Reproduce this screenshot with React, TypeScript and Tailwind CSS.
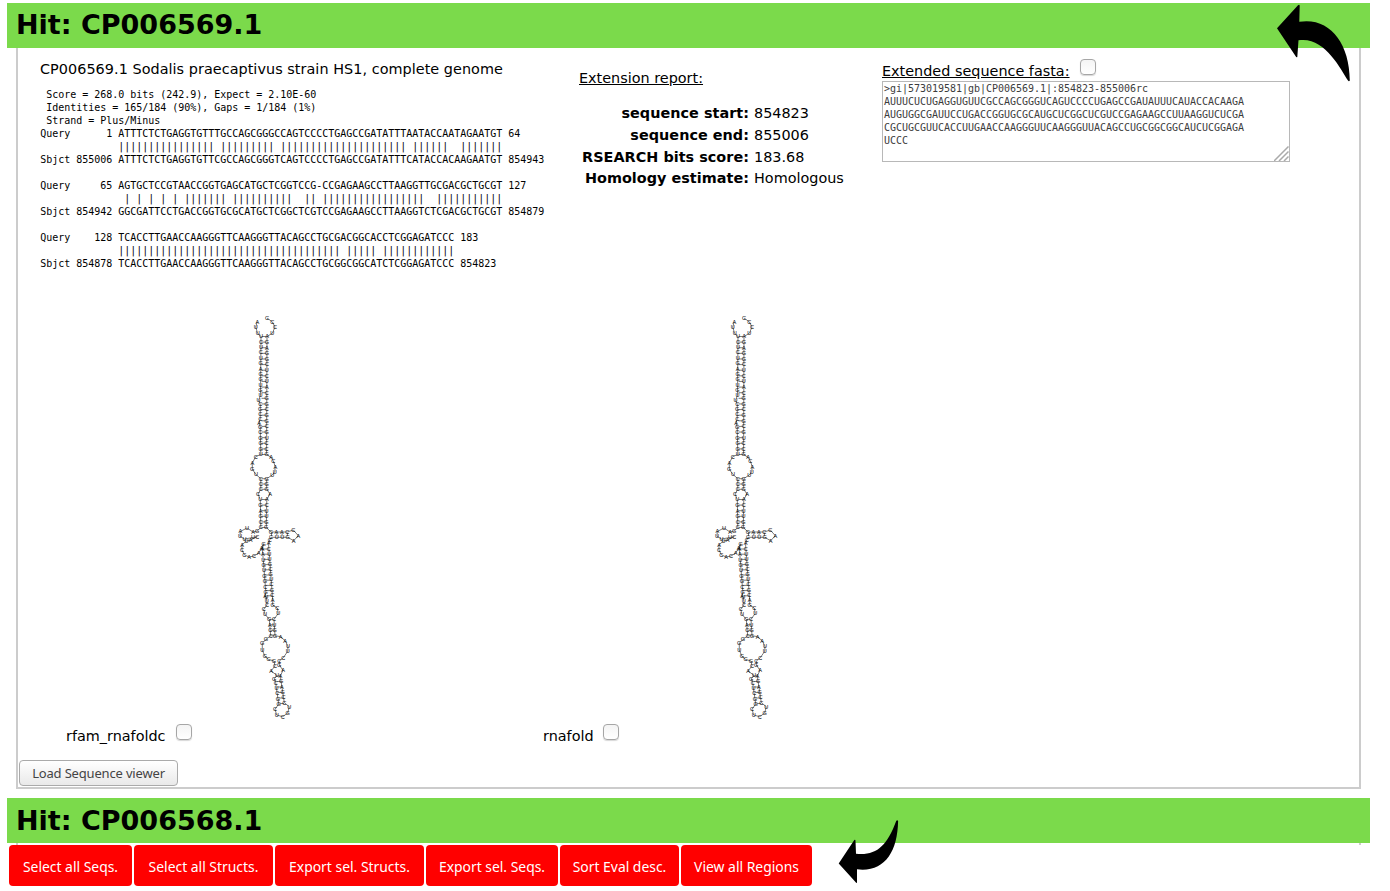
import React from "react";

type Point = [string, number, number];

const stem = (letters: string, x1: number, y1: number, x2: number, y2: number): Point[] =>
  letters.split("").map((c, i) => {
    const t = letters.length > 1 ? i / (letters.length - 1) : 0;
    return [c, x1 + (x2 - x1) * t, y1 + (y2 - y1) * t];
  });

// Nucleotides in 5' to 3' order
const bases: Point[] = [
  ["A", 32.3, 16.7], ["U", 30.7, 22], ["U", 32.7, 28.5],
  ...stem("UCUCUGAGGUGU", 36, 31.5, 35.5, 90.5),
  ["U", 33.6, 94.9],
  ...stem("CGCC", 35.3, 99.3, 35.2, 114),
  ["A", 34, 118],
  ...stem("GCGGGU", 35.2, 122, 35.8, 149.5),
  ["C", 30.7, 151.7], ["A", 27.3, 158], ["G", 27.3, 164.3], ["U", 31, 169.5],
  ...stem("CCC", 35.8, 173.7, 35.8, 184.3),
  ["C", 33, 189],
  ...stem("UGAGCC", 35.3, 194.5, 35.8, 222.5),
  ["G", 32.3, 226], ["A", 28, 227], ["U", 22, 223], ["A", 15.3, 226.5], ["U", 15, 231.3],
  ["U", 19.5, 234], ["U", 28, 232.5], ["C", 32.3, 231.7], ["A", 25.5, 235], ["U", 21.5, 236],
  ["A", 17, 239.7], ["C", 17, 245], ["C", 19.3, 249.7], ["A", 24, 252], ["C", 29, 251],
  ["A", 33.7, 248], ["A", 36.7, 243], ["G", 38.6, 238.7],
  ...stem("AAUGUGGCG", 37.4, 244, 40.8, 287),
  ["A", 40, 291.5],
  ...stem("UU", 41.2, 292, 41.8, 296.5),
  ["C", 42, 300], ["C", 38.7, 304.3], ["U", 40, 309.3],
  ...stem("GACC", 44.3, 314.3, 45.7, 331),
  ["G", 41, 334.3], ["G", 37.3, 338.3], ["U", 37.3, 345], ["G", 40, 351.5], ["C", 43.5, 354.3],
  ["G", 49, 356], ["C", 50, 361], ["A", 46, 366], ["U", 52, 370.3], ["G", 49.3, 373.7],
  ...stem("CUCGG", 50.7, 377.7, 53.7, 399),
  ["C", 50, 404.3], ["U", 51.7, 410], ["C", 57.7, 411.7], ["G", 62.7, 408], ["U", 64.3, 401.7],
  ...stem("CCGAGA", 59.3, 397.7, 55.3, 371),
  ["A", 58, 365.3], ["G", 54.3, 360],
  ["C", 54.3, 356], ["C", 58.3, 352.7], ["U", 62.7, 346.3], ["U", 63, 341], ["A", 60, 335.7], ["A", 55.7, 331.7],
  ...stem("GGUC", 50, 330.7, 49, 314.3),
  ["U", 53.3, 308.3], ["C", 52.3, 303], ["G", 47.7, 300],
  ...stem("ACGCUGCGUUCA", 47.7, 295, 43.5, 238.5),
  ["C", 44.7, 235], ["C", 46, 232.3],
  ...stem("UUG", 51.7, 232.3, 62.7, 232.3),
  ["A", 68.7, 235.7], ["A", 73.3, 230.7], ["C", 68.3, 225],
  ...stem("CAAG", 62.3, 227, 46, 227),
  ...stem("GGUUCA", 41.3, 222.5, 41.8, 194.5),
  ["A", 45, 189],
  ...stem("GGG", 41.7, 184.3, 41.7, 173.7),
  ["U", 47.3, 170], ["U", 49.7, 166.7], ["A", 50.3, 161.7], ["C", 48.3, 156], ["A", 46, 152.3],
  ...stem("GCCUGCGGCGGCAUCUCGGAGA", 41.6, 149.5, 42, 31.5),
  ["U", 47.3, 28.3], ["C", 50, 22], ["C", 47.3, 16.8], ["C", 42, 13],
];

const rungs: number[][] = [];
for (let i = 0; i < 22; i++) rungs.push([36.5, 31.5 + i * 5.62, 41, 31.5 + i * 5.62]);
for (let i = 0; i < 3; i++) rungs.push([36.5, 173.7 + i * 5.3, 41, 173.7 + i * 5.3]);
for (let i = 0; i < 6; i++) rungs.push([36.5, 194.5 + i * 5.6, 41, 194.5 + i * 5.6]);
for (let i = 0; i < 10; i++) rungs.push([38 + i * 0.38, 244 + i * 5.2, 43.5 + i * 0.38, 244 + i * 5.2]);
for (let i = 0; i < 4; i++) rungs.push([45 + i * 0.4, 314.3 + i * 5.5, 48.5 + i * 0.4, 314.3 + i * 5.5]);
for (let i = 0; i < 6; i++) rungs.push([51 + i * 0.7, 371 + i * 5.5, 55.5 + i * 0.7, 371 + i * 5.5]);
for (let i = 0; i < 4; i++) rungs.push([46.5 + i * 5.3, 228, 46.5 + i * 5.3, 231]);

function Structure() {
  return (
    <svg width="90" height="420" viewBox="0 0 90 420" className="block shrink-0">
      <polyline
        points={bases.map(([, x, y]) => x + "," + y).join(" ")}
        fill="none"
        stroke="#222"
        strokeWidth="0.6"
      />
      {rungs.map(([a, b, c, d], i) => (
        <line key={i} x1={a} y1={b} x2={c} y2={d} stroke="#222" strokeWidth="0.6" />
      ))}
      <g className="font-['Liberation_Sans']" fontSize="5.6" textAnchor="middle" fill="#000">
        {bases.map(([c, x, y], i) => (
          <text key={i} x={x} y={y + 1.9}>{c}</text>
        ))}
      </g>
    </svg>
  );
}

const alignment = ` Score = 268.0 bits (242.9), Expect = 2.10E-60
 Identities = 165/184 (90%), Gaps = 1/184 (1%)
 Strand = Plus/Minus
Query      1 ATTTCTCTGAGGTGTTTGCCAGCGGGCCAGTCCCCTGAGCCGATATTTAATACCAATAGAATGT 64
             |||||||||||||||| ||||||||| ||||||||||||||||||||| ||||||  |||||||
Sbjct 855006 ATTTCTCTGAGGTGTTCGCCAGCGGGTCAGTCCCCTGAGCCGATATTTCATACCACAAGAATGT 854943

Query     65 AGTGCTCCGTAACCGGTGAGCATGCTCGGTCCG-CCGAGAAGCCTTAAGGTTGCGACGCTGCGT 127
              | | | | | ||||||| ||||||||||  || |||||||||||||||||  |||||||||||
Sbjct 854942 GGCGATTCCTGACCGGTGCGCATGCTCGGCTCGTCCGAGAAGCCTTAAGGTCTCGACGCTGCGT 854879

Query    128 TCACCTTGAACCAAGGGTTCAAGGGTTACAGCCTGCGACGGCACCTCGGAGATCCC 183
             ||||||||||||||||||||||||||||||||||||| ||||| ||||||||||||
Sbjct 854878 TCACCTTGAACCAAGGGTTCAAGGGTTACAGCCTGCGGCGGCATCTCGGAGATCCC 854823`;

const fasta = `>gi|573019581|gb|CP006569.1|:854823-855006rc
AUUUCUCUGAGGUGUUCGCCAGCGGGUCAGUCCCCUGAGCCGAUAUUUCAUACCACAAGA
AUGUGGCGAUUCCUGACCGGUGCGCAUGCUCGGCUCGUCCGAGAAGCCUUAAGGUCUCGA
CGCUGCGUUCACCUUGAACCAAGGGUUCAAGGGUUACAGCCUGCGGCGGCAUCUCGGAGA
UCCC`;

function Check() {
  return (
    <input
      type="checkbox"
      className="m-0 block size-4 shrink-0 appearance-none rounded-[4px] border border-[#a6a6a6] bg-linear-to-b from-[#f4f4f4] to-white shadow-[0_1px_1px_#d8d8d8]"
    />
  );
}

function HitHeader({ id, pad }: { id: string; pad: string }) {
  return (
    <h2 className={"flex h-[45px] w-[1363px] items-center bg-[#7bda4b] pl-[9px] text-[27px] leading-none font-bold whitespace-nowrap " + pad}>
      Hit: {id}
    </h2>
  );
}

const report = [
  ["sequence start:", "854823", "h-[22px]"],
  ["sequence end:", "855006", "h-[22px]"],
  ["RSEARCH bits score:", "183.68", "h-[21px]"],
  ["Homology estimate:", "Homologous", "h-[22px]"],
];

const actions = [
  ["Select all Seqs.", "w-[123px]"],
  ["Select all Structs.", "w-[139px]"],
  ["Export sel. Structs.", "w-[149px]"],
  ["Export sel. Seqs.", "w-[132px]"],
  ["Sort Eval desc.", "w-[119px]"],
  ["View all Regions", "w-[131px]"],
];

export default function App() {
  return (
    <main className="relative h-[891px] w-[1390px] overflow-hidden bg-white pt-[3px] pl-[7px] font-['DejaVu_Sans',sans-serif] text-[14.4px] leading-[17px] text-black">
      <HitHeader id="CP006569.1" pad="pb-[2px]" />
      <section className="ml-[9px] flex h-[741px] w-[1345px] flex-col border-2 border-t-0 border-[#ccc]">
        <div className="flex h-[257px] shrink-0 pl-[22px]">
          <div className="w-[539px] shrink-0 pt-[13px] whitespace-nowrap">
            <p className="h-[27px] tracking-[0.045px]">CP006569.1 Sodalis praecaptivus strain HS1, complete genome</p>
            <pre className="ml-[0.25px] font-['DejaVu_Sans_Mono',monospace] text-[10px] leading-[13px] tracking-[-0.02px]">{alignment}</pre>
          </div>
          <div className="w-[303px] shrink-0 pt-[22px] whitespace-nowrap">
            <h3 className="mb-[15px] underline">Extension report:</h3>
            <dl className="grid grid-cols-[170px_auto] gap-x-[5px]">
              {report.map(([k, v, h]) => (
                <React.Fragment key={k}>
                  <dt className={"text-right leading-[22px] font-bold tracking-[0.03px] " + h}>{k}</dt>
                  <dd className={"leading-[22px] " + h}>{v}</dd>
                </React.Fragment>
              ))}
            </dl>
          </div>
          <div className="w-[408px] pt-[11px]">
            <div className="flex h-[22px] items-start gap-[10px]">
              <h3 className="pt-1 whitespace-nowrap underline">Extended sequence fasta:</h3>
              <Check />
            </div>
            <div className="relative h-[81px] w-[408px] border border-[#b8b8b8] px-px">
              <pre className="font-['DejaVu_Sans_Mono',monospace] text-[10px] leading-[13px] tracking-[-0.02px] text-[#3c3c3c]">{fasta}</pre>
              <svg className="absolute right-0 bottom-0" width="15" height="15" viewBox="0 0 15 15" stroke="#aaa" strokeWidth="1.5">
                <path d="M0 15 14.5 0.5M5 15 14.5 5.5M10 15 14.5 10.5" />
              </svg>
            </div>
          </div>
        </div>
        <div className="flex h-[455px] shrink-0">
          <div className="flex w-[477px] flex-col">
            <div className="h-[419px] pl-[207px]"><Structure /></div>
            <div className="flex items-start gap-[10px] pl-[48px]">
              <span className="pt-[4px]">rfam_rnafoldc</span>
              <Check />
            </div>
          </div>
          <div className="flex flex-col">
            <div className="h-[419px] pl-[207px]"><Structure /></div>
            <div className="flex items-start gap-[9px] pl-[48px]">
              <span className="pt-[4px]">rnafold</span>
              <Check />
            </div>
          </div>
        </div>
        <button className="ml-px h-[26px] w-[159px] rounded-[4px] border border-[#aaa] bg-linear-to-b from-white to-[#e9e9e9] font-['Noto_Sans',sans-serif] text-[13px] leading-none tracking-[-0.17px] text-[#444]">
          Load Sequence viewer
        </button>
      </section>
      <div className="mt-[9px]"><HitHeader id="CP006568.1" pad="" /></div>
      <div className="ml-[9px] h-[2px] w-[1345px] border-x-2 border-[#ccc]" />
      <nav className="ml-[2px] flex gap-[2px] font-['Noto_Sans',sans-serif] text-[13.9px] text-white">
        {actions.map(([label, w]) => (
          <button key={label} className={"h-[41px] rounded-[4px] bg-[#ff0000] pt-[2px] leading-none whitespace-nowrap " + w}>
            {label}
          </button>
        ))}
      </nav>
      <svg className="absolute top-0 left-[1270px]" width="90" height="90" viewBox="0 0 90 90">
        <path d="M7 28.3 28 5.3Q29.6 4 29.7 6L29.3 21.8C59 17 79.5 42 79.8 80.5Q79 82 78 80.5C70 68 54 36 28.5 40.3L27.3 57Q26.5 57.8 25.5 56Z" />
      </svg>
      <svg className="absolute top-[815px] left-[830px]" width="75" height="75" viewBox="0 0 75 75">
        <path d="M8.7 48.5 24.3 25Q25.5 24.3 25.5 26L26 38.8C46 41 57 31 66.2 6Q67.2 4.5 68.1 6C67.5 38 54 57.5 27 54.3V67.5Q26.5 68.5 25.5 67Z" />
      </svg>
    </main>
  );
}
